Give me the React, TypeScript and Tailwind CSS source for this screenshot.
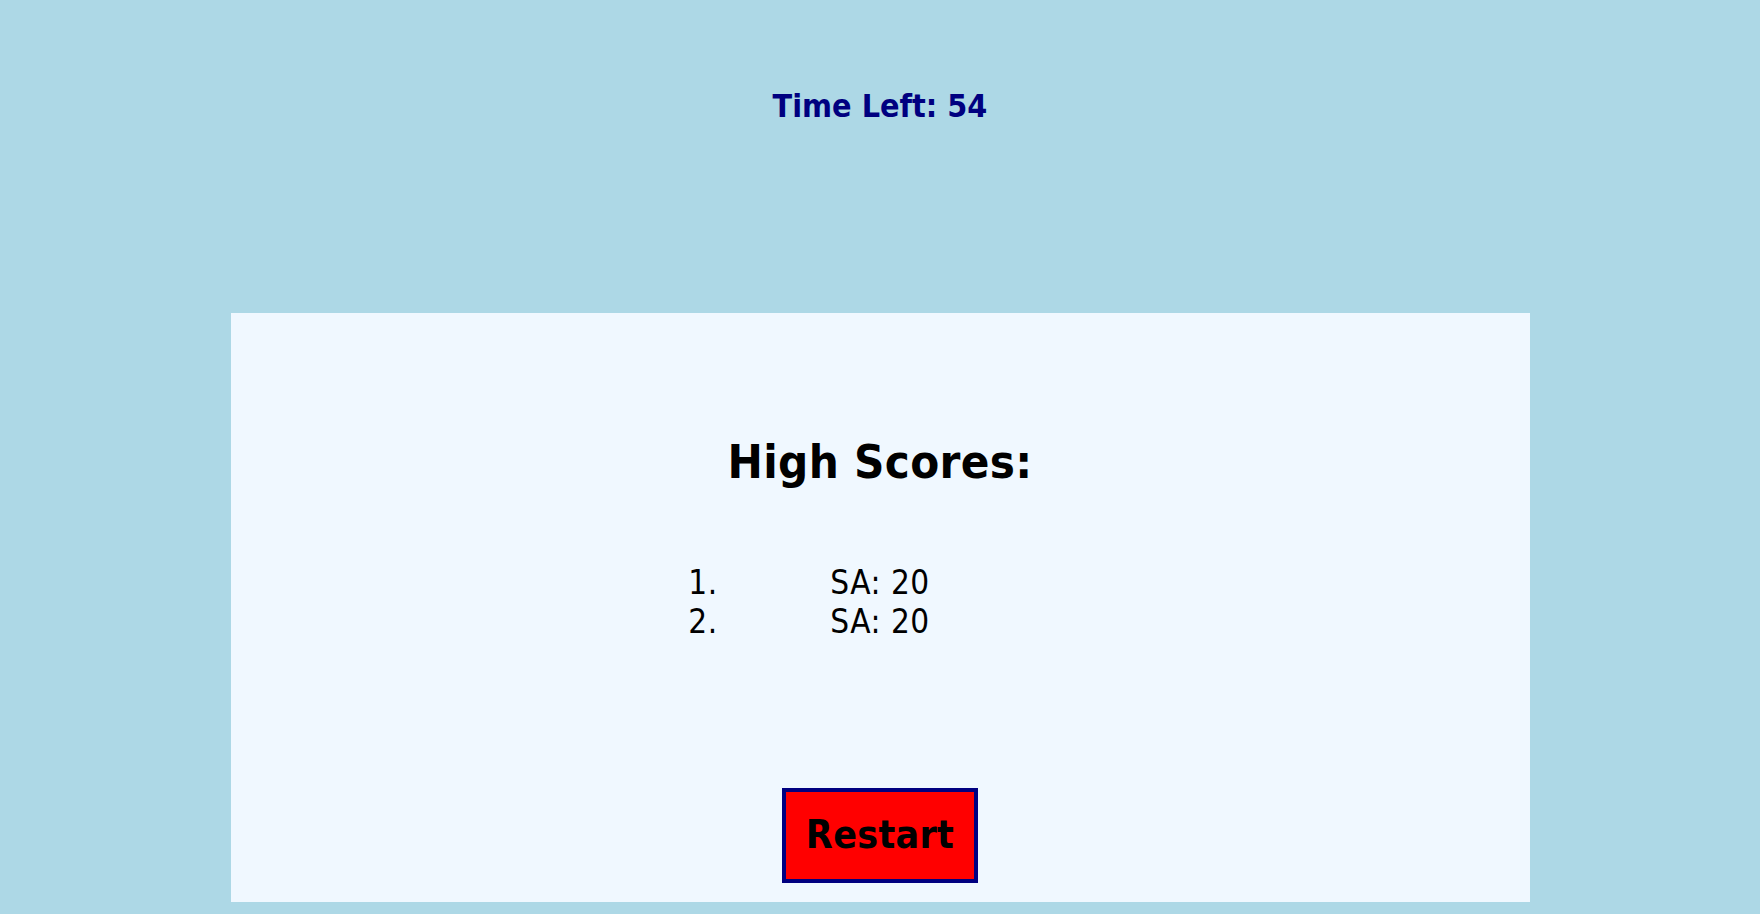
import React from "react";

type Score = { name: string; score: number };

const scores: Score[] = [
  { name: "SA", score: 20 },
  { name: "SA", score: 20 },
];

const App: React.FC = () => {
  return (
    <div className="min-h-screen bg-[#add8e6] font-['DejaVu_Sans_Condensed','DejaVu_Sans',sans-serif] pt-[86px]">
      <div className="h-[40px] text-center text-[32px] leading-[40px] font-bold text-[#000080]">
        Time Left: 54
      </div>
      <div className="mx-auto mt-[187px] flex w-[1299px] flex-col items-center bg-[#f0f8ff] pt-[119px] pb-[19px]">
        <h1 className="h-[60px] text-center text-[47px] leading-[60px] font-bold tracking-[0.3px] text-black">
          High Scores:
        </h1>
        <ol className="mt-[71px] grid grid-cols-[142px_auto_142px] text-[33px] leading-[39px] tracking-[0.5px] text-black">
          {scores.map((s, i) => (
            <li key={i} className="contents">
              <span>{i + 1}.</span>
              <span className="text-center">
                {s.name}: {s.score}
              </span>
              <span />
            </li>
          ))}
        </ol>
        <button className="mt-[147px] h-[95px] w-[196px] border-4 border-[#000080] bg-[#ff0000] text-[39px] font-bold tracking-[0.3px] text-black">
          Restart
        </button>
      </div>
    </div>
  );
};

export default App;
